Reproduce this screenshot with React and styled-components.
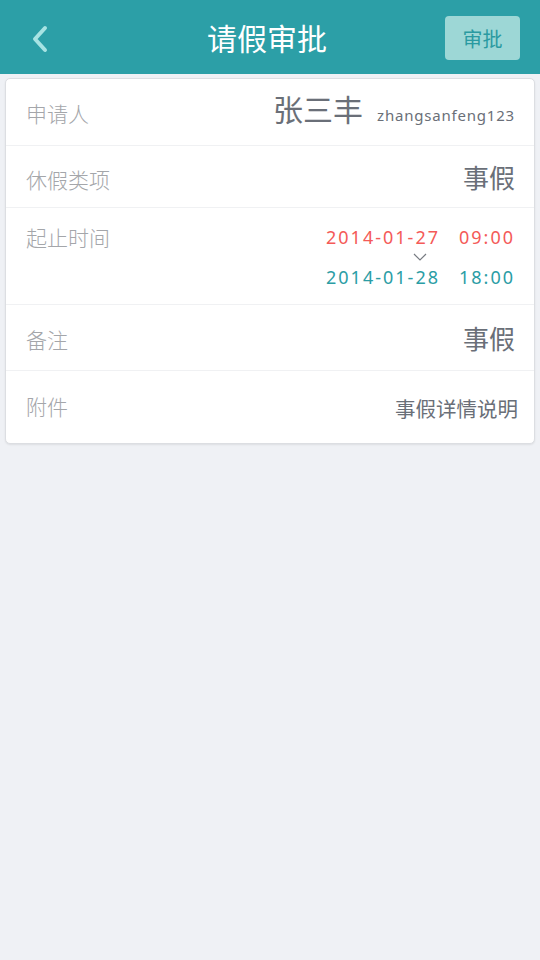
import React from 'react';
import styled, { createGlobalStyle } from 'styled-components';

const GlobalStyle = createGlobalStyle`
  html, body {
    margin: 0;
    padding: 0;
    background: #eff1f5;
    font-family: "Noto Sans CJK SC", "Noto Sans", sans-serif;
  }
`;

const Page = styled.div`
  width: 540px;
  min-height: 960px;
  background: #eff1f5;
`;

const Header = styled.header`
  height: 74px;
  background: #2c9fa7;
  display: flex;
  align-items: center;
  justify-content: space-between;
  padding: 0 20px 0 31px;
  box-sizing: border-box;
  position: relative;
`;

const BackButton = styled.button`
  background: none;
  border: none;
  padding: 0;
  width: 28px;
  height: 30px;
  display: flex;
  align-items: center;
  margin-top: 4px;
  cursor: pointer;
`;

const Title = styled.h1`
  position: absolute;
  left: 0;
  right: 0;
  margin: 0;
  padding-right: 6px;
  text-align: center;
  color: #ffffff;
  font-size: 30px;
  font-weight: 400;
  pointer-events: none;
`;

const ApproveButton = styled.button`
  width: 75px;
  height: 44px;
  margin-top: 2px;
  border: none;
  border-radius: 4px;
  background: #9dd7d6;
  color: #2a9aa1;
  font-family: inherit;
  font-size: 20px;
`;

const Card = styled.section`
  margin: 4px 5px 0;
  background: #ffffff;
  border: 1px solid #dcdee2;
  border-radius: 5px;
  box-shadow: 0 1px 2px rgba(0, 0, 0, 0.08);
`;

const Row = styled.div`
  display: flex;
  justify-content: space-between;
  align-items: ${p => (p.$top ? 'flex-start' : 'center')};
  height: ${p => p.$h}px;
  padding: ${p => (p.$top ? '14px 19px 0 20px' : '0 19px 0 20px')};
  box-sizing: border-box;
  border-bottom: ${p => (p.$last ? 'none' : '1px solid #f0f1f3')};
`;

const Label = styled.span`
  color: #a4a6aa;
  font-size: 21px;
  font-weight: 300;
  margin-top: ${p => p.$dy || 0}px;
`;

const Applicant = styled.div`
  display: flex;
  align-items: baseline;
  gap: 14px;
  color: #6a6f78;
  margin-top: -8px;
`;

const Name = styled.span`
  font-size: 30px;
`;

const Account = styled.span`
  font-size: 15px;
  letter-spacing: 0.8px;
  font-family: "Noto Sans", sans-serif;
`;

const Value = styled.span`
  color: #6a6f78;
  font-size: ${p => p.$size || 26}px;
  margin-right: ${p => p.$mr || 0}px;
  margin-top: ${p => p.$dy || 0}px;
`;

const Range = styled.div`
  display: flex;
  flex-direction: column;
  align-items: flex-end;
  font-family: "Noto Sans", sans-serif;
  font-size: 18px;
  letter-spacing: 2px;
  line-height: 22px;
  margin-top: 4px;
`;

const When = styled.div`
  display: flex;
  gap: 19px;
  color: ${p => p.$color};
`;

const Arrow = styled.div`
  height: 18px;
  width: 100%;
  display: flex;
  justify-content: flex-end;
  padding-right: 88px;
  box-sizing: border-box;
  align-items: center;
`;

export default function App() {
  return (
    <Page>
      <GlobalStyle />
      <Header>
        <BackButton aria-label="back">
          <svg width="18" height="28" viewBox="0 0 18 28">
            <path d="M14 3 L4 14 L14 25" fill="none" stroke="#a7e3e3" strokeWidth="4" strokeLinecap="round" strokeLinejoin="round" />
          </svg>
        </BackButton>
        <Title>请假审批</Title>
        <ApproveButton>审批</ApproveButton>
      </Header>
      <Card>
        <Row $h={67}>
          <Label $dy={2}>申请人</Label>
          <Applicant>
            <Name>张三丰</Name>
            <Account>zhangsanfeng123</Account>
          </Applicant>
        </Row>
        <Row $h={62}>
          <Label $dy={4}>休假类项</Label>
          <Value $size={26}>事假</Value>
        </Row>
        <Row $h={97} $top>
          <Label>起止时间</Label>
          <Range>
            <When $color="#f45a58">
              <span>2014-01-27</span>
              <span>09:00</span>
            </When>
            <Arrow>
              <svg width="14" height="8" viewBox="0 0 14 8">
                <path d="M1 1 L7 7 L13 1" fill="none" stroke="#777b82" strokeWidth="1.2" />
              </svg>
            </Arrow>
            <When $color="#2b9da5">
              <span>2014-01-28</span>
              <span>18:00</span>
            </When>
          </Range>
        </Row>
        <Row $h={66}>
          <Label $dy={2}>备注</Label>
          <Value $size={26}>事假</Value>
        </Row>
        <Row $h={72} $last>
          <Label $dy={-2}>附件</Label>
          <Value $size={20.5} $mr={-3} $dy={2}>事假详情说明</Value>
        </Row>
      </Card>
    </Page>
  );
}
